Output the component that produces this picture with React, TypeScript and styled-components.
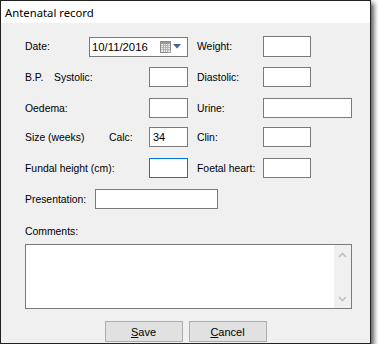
import styled, { createGlobalStyle } from 'styled-components';

const GlobalStyle = createGlobalStyle`
  html, body {
    margin: 0;
    padding: 0;
    background: #ffffff;
  }
  * {
    box-sizing: border-box;
  }
`;

const Window = styled.div`
  width: 371px;
  height: 344px;
  display: flex;
  flex-direction: column;
  border: 1px solid #222;
  background: #f0f0f0;
  box-shadow: 3px 3px 5px rgba(0, 0, 0, 0.65);
`;

const TitleBar = styled.div`
  height: 22px;
  background: #fff;
  display: flex;
  align-items: center;
  padding-left: 4px;
  font-family: 'Noto Sans', sans-serif;
  font-size: 11.3px;
  color: #000;
`;

const Body = styled.div`
  flex: 1;
  display: flex;
  flex-direction: column;
  padding: 13px 0 0 24px;
  font-family: 'Liberation Sans', Arial, sans-serif;
  font-size: 10.4px;
  color: #000;
`;

const Row = styled.div<{ $top?: number; $h?: number }>`
  display: flex;
  align-items: center;
  height: ${({ $h }) => $h ?? 20}px;
  margin-top: ${({ $top }) => $top ?? 0}px;
`;

const Half = styled.div<{ $w?: number }>`
  display: flex;
  align-items: center;
  width: ${({ $w }) => ($w ? `${$w}px` : 'auto')};
`;

const Label = styled.span<{ $w: number }>`
  width: ${({ $w }) => $w}px;
  white-space: nowrap;
  line-height: 13px;
`;

const TextBox = styled.div<{ $w: number; $h?: number; $focus?: boolean }>`
  width: ${({ $w }) => $w}px;
  height: ${({ $h }) => $h ?? 20}px;
  background: #fff;
  border: 1px solid ${({ $focus }) => ($focus ? '#0078d7' : '#7a7a7a')};
  display: flex;
  align-items: center;
  padding-left: 3px;
  font-size: 11px;
`;

const DatePicker = styled.div`
  width: 99px;
  height: 20px;
  background: #fff;
  border: 1px solid #7a7a7a;
  display: flex;
  align-items: center;
  padding: 0 6px 0 2px;
  font-size: 11.3px;
  span {
    flex: 1;
  }
  svg {
    display: block;
  }
`;

const CommentsLabel = styled.div`
  margin-top: 16px;
  line-height: 13px;
`;

const CommentsBox = styled.div`
  margin-top: 6px;
  width: 327px;
  height: 65px;
  background: #fff;
  border: 1px solid #7a7a7a;
  display: flex;
`;

const CommentsArea = styled.textarea`
  flex: 1;
  border: none;
  outline: none;
  resize: none;
  background: transparent;
  font-family: inherit;
  font-size: 11px;
`;

const ScrollBar = styled.div`
  width: 17px;
  background: #f0f0f0;
  display: flex;
  flex-direction: column;
  justify-content: space-between;
  align-items: center;
  padding: 7px 0 6px;
`;

const ButtonRow = styled.div`
  margin: 12px 0 0 -24px;
  display: flex;
  justify-content: center;
  gap: 6px;
`;

const Button = styled.button`
  width: 78px;
  height: 21px;
  background: #e1e1e1;
  border: 1px solid #adadad;
  font-family: 'Liberation Sans', Arial, sans-serif;
  font-size: 11px;
  color: #000;
  padding: 0;
  u {
    text-decoration: underline;
  }
`;

const CalendarIcon = () => (
  <svg width="11" height="12" viewBox="0 0 11 12">
    <rect x="0.5" y="0.5" width="10" height="11" fill="#ececec" stroke="#8c8c8c" />
    <rect x="1" y="1" width="9" height="2" fill="#9a9a9a" />
    {[4, 6, 8].map((y) => (
      <line key={y} x1="1" x2="10" y1={y + 0.5} y2={y + 0.5} stroke="#b4b4b4" />
    ))}
    {[3, 5, 7].map((x) => (
      <line key={x} x1={x + 0.5} x2={x + 0.5} y1="3" y2="11" stroke="#b4b4b4" />
    ))}
    <path d="M7 11.5 L10.5 8 L10.5 11.5 Z" fill="#ffffff" stroke="#8c8c8c" strokeWidth="0.6" />
  </svg>
);

const DropArrow = () => (
  <svg width="8" height="5" viewBox="0 0 8 5" style={{ marginLeft: 2 }}>
    <path d="M0 0 H8 L4 4.5 Z" fill="#44638a" />
  </svg>
);

const Chevron = ({ up }: { up?: boolean }) => (
  <svg width="9" height="6" viewBox="0 0 9 6">
    <path
      d={up ? 'M1 5 L4.5 1.5 L8 5' : 'M1 1 L4.5 4.5 L8 1'}
      fill="none"
      stroke="#c2c2c2"
      strokeWidth="1.6"
    />
  </svg>
);

const App = () => {
  return (
    <>
      <GlobalStyle />
      <Window>
        <TitleBar>Antenatal record</TitleBar>
        <Body>
          <Row $h={21}>
            <Half $w={172}>
              <Label $w={64}>Date:</Label>
              <DatePicker>
                <span>10/11/2016</span>
                <CalendarIcon />
                <DropArrow />
              </DatePicker>
            </Half>
            <Half>
              <Label $w={66}>Weight:</Label>
              <TextBox $w={48} $h={21} />
            </Half>
          </Row>
          <Row $top={10}>
            <Half $w={172}>
              <Label $w={29}>B.P.</Label>
              <Label $w={95}>Systolic:</Label>
              <TextBox $w={39} />
            </Half>
            <Half>
              <Label $w={66}>Diastolic:</Label>
              <TextBox $w={48} />
            </Half>
          </Row>
          <Row $top={11}>
            <Half $w={172}>
              <Label $w={124}>Oedema:</Label>
              <TextBox $w={39} />
            </Half>
            <Half>
              <Label $w={66}>Urine:</Label>
              <TextBox $w={89} />
            </Half>
          </Row>
          <Row $top={9}>
            <Half $w={172}>
              <Label $w={84}>Size (weeks)</Label>
              <Label $w={40}>Calc:</Label>
              <TextBox $w={39}>34</TextBox>
            </Half>
            <Half>
              <Label $w={66}>Clin:</Label>
              <TextBox $w={48} />
            </Half>
          </Row>
          <Row $top={11}>
            <Half $w={172}>
              <Label $w={124}>Fundal height (cm):</Label>
              <TextBox $w={39} $focus />
            </Half>
            <Half>
              <Label $w={66}>Foetal heart:</Label>
              <TextBox $w={48} />
            </Half>
          </Row>
          <Row $top={11}>
            <Half>
              <Label $w={70}>Presentation:</Label>
              <TextBox $w={123} />
            </Half>
          </Row>
          <CommentsLabel>Comments:</CommentsLabel>
          <CommentsBox>
            <CommentsArea />
            <ScrollBar>
              <Chevron up />
              <Chevron />
            </ScrollBar>
          </CommentsBox>
          <ButtonRow>
            <Button>
              <u>S</u>ave
            </Button>
            <Button>
              <u>C</u>ancel
            </Button>
          </ButtonRow>
        </Body>
      </Window>
    </>
  );
};

export default App;
